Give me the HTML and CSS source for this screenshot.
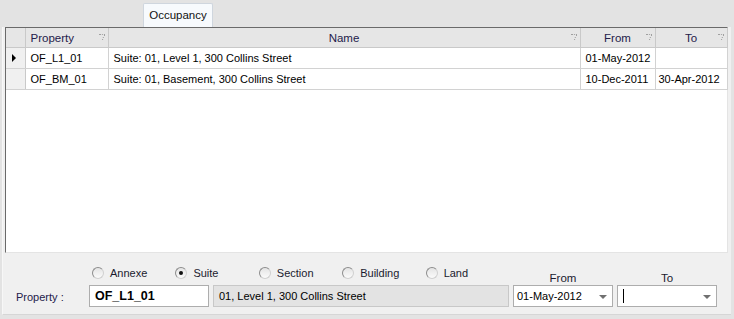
FILE: index.html
```html
<!DOCTYPE html>
<html lang="en">
<head>
    <meta charset="UTF-8">
    <title>Occupancy</title>
    <link rel="stylesheet" href="styles.css">
</head>
<body>
    <div class="tabs">
        <div class="tab">Occupancy</div>
    </div>
    <div class="panel">
        <div class="grid">
            <table class="grid-table">
                <colgroup>
                    <col class="c-row">
                    <col class="c-prop">
                    <col class="c-name">
                    <col class="c-from">
                    <col class="c-to">
                </colgroup>
                <thead>
                    <tr>
                        <th class="row-head"></th>
                        <th>Property<span class="pin"></span></th>
                        <th>Name<span class="pin"></span></th>
                        <th>From<span class="pin"></span></th>
                        <th>To<span class="pin"></span></th>
                    </tr>
                </thead>
                <tbody>
                    <tr>
                        <td class="row-head"><span class="arrow"></span></td>
                        <td>OF_L1_01</td>
                        <td>Suite: 01, Level 1, 300 Collins Street</td>
                        <td>01-May-2012</td>
                        <td></td>
                    </tr>
                    <tr>
                        <td class="row-head"></td>
                        <td>OF_BM_01</td>
                        <td>Suite: 01, Basement, 300 Collins Street</td>
                        <td>10-Dec-2011</td>
                        <td>30-Apr-2012</td>
                    </tr>
                </tbody>
            </table>
        </div>

        <div class="editor">
            <div class="radios">
                <label class="radio"><span class="dot"></span>Annexe</label>
                <label class="radio"><span class="dot checked"></span>Suite</label>
                <label class="radio"><span class="dot"></span>Section</label>
                <label class="radio"><span class="dot"></span>Building</label>
                <label class="radio"><span class="dot"></span>Land</label>
            </div>
            <div class="date-label">From</div>
            <div class="date-label">To</div>

            <div class="field-label">Property :</div>
            <div class="box code">OF_L1_01</div>
            <div class="box readonly">01, Level 1, 300 Collins Street</div>
            <div class="box combo">01-May-2012<span class="drop"></span></div>
            <div class="box combo"><span class="caret"></span><span class="drop"></span></div>
        </div>
    </div>
</body>
</html>
```

FILE: styles.css
```css
body {
    margin: 0;
    background: #e3e3e3;
    font-family: "Liberation Sans", Arial, sans-serif;
    font-size: 11px;
    color: #000;
}

.tabs {
    height: 27px;
    padding-left: 143px;
    box-sizing: border-box;
    padding-top: 3px;
}

.tab {
    width: 68px;
    height: 23px;
    line-height: 22px;
    text-align: center;
    font-size: 11.5px;
    background: #f7fafd;
    border: 1px solid #cfd6de;
    border-bottom: none;
    border-radius: 2px 2px 0 0;
    color: #111;
}

.panel {
    margin: 0 3px 6px 2px;
    padding: 0 3px 0 2px;
    background: #f0f0f0;
    border-left: 1px solid #f7f7f7;
    border-bottom: 1px solid #d6d6d6;
}

.grid {
    height: 224px;
    background: #fff;
    border: 1px solid;
    border-color: #6a6a6a #e4e4e4 #e4e4e4 #6a6a6a;
}

.grid-table {
    width: 721px;
    border-collapse: collapse;
    table-layout: fixed;
}

.c-row { width: 19px; }
.c-prop { width: 83px; }
.c-name { width: 472px; }
.c-from { width: 75px; }
.c-to { width: 72px; }

.grid-table th {
    position: relative;
    height: 19px;
    padding: 0;
    background: #e6e6e6;
    border-right: 1px solid #c9c9c9;
    border-bottom: 1px solid #c9c9c9;
    font-weight: normal;
    font-size: 11.5px;
    color: #24204a;
    text-align: center;
}

.grid-table th:nth-child(2) {
    text-align: left;
    padding-left: 5px;
}

.grid-table td {
    height: 20px;
    padding: 0 0 0 5px;
    border-right: 1px solid #d2d2d2;
    border-bottom: 1px solid #d2d2d2;
    white-space: nowrap;
    overflow: hidden;
}

.grid-table td:last-child {
    padding-left: 3px;
}

.grid-table .row-head {
    background: #f0f0f0;
    padding: 0;
    border-right: 1px solid #c9c9c9;
}

.grid-table th.row-head {
    background: #e6e6e6;
}

.arrow {
    display: block;
    width: 0;
    height: 0;
    margin-left: 6px;
    border-top: 4px solid transparent;
    border-bottom: 4px solid transparent;
    border-left: 4px solid #000;
}

.pin {
    position: absolute;
    right: 4px;
    top: 6px;
    width: 5px;
    height: 5px;
    border-top: 1px dotted #a0a0a0;
    border-right: 1px dotted #a0a0a0;
    transform: skewX(-20deg);
}

.editor {
    display: grid;
    grid-template-columns: 80px 120px 296px 100px 100px;
    grid-template-rows: 31px 24px;
    column-gap: 4px;
    padding: 1px 0 5px 0;
}

.radios {
    grid-column: 1 / 4;
    display: flex;
    align-items: center;
    padding: 7px 0 0 87px;
}

.radio {
    display: flex;
    align-items: center;
    width: 84px;
    color: #1a1a2e;
}

.dot {
    position: relative;
    width: 10px;
    height: 10px;
    margin-right: 6px;
    border: 1px solid #9a9a9a;
    border-radius: 50%;
    background: linear-gradient(#e4e4e4, #fbfbfb);
    border-color: #8c8c8c #d0d0d0 #d0d0d0 #8c8c8c;
}

.dot.checked::after {
    content: "";
    position: absolute;
    left: 3px;
    top: 3px;
    width: 4px;
    height: 4px;
    border-radius: 50%;
    background: #111;
}

.date-label {
    align-self: end;
    padding-bottom: 1px;
    text-align: center;
    font-size: 11.5px;
    color: #1a1a2e;
}

.field-label {
    align-self: center;
    padding-left: 11px;
    color: #24204a;
}

.box {
    display: flex;
    align-items: center;
    box-sizing: border-box;
    height: 22px;
    padding-left: 5px;
    background: #fff;
    border: 1px solid #adadad;
}

.code {
    font-weight: bold;
    font-size: 12.5px;
}

.readonly {
    background: #e3e3e3;
    border-color: #c8c8c8;
}

.combo {
    position: relative;
    padding-left: 3px;
}

.drop {
    position: absolute;
    right: 5px;
    top: 9px;
    width: 0;
    height: 0;
    border-left: 4px solid transparent;
    border-right: 4px solid transparent;
    border-top: 4px solid #707070;
}

.caret {
    width: 1px;
    height: 14px;
    margin-left: 2px;
    background: #000;
}
```
